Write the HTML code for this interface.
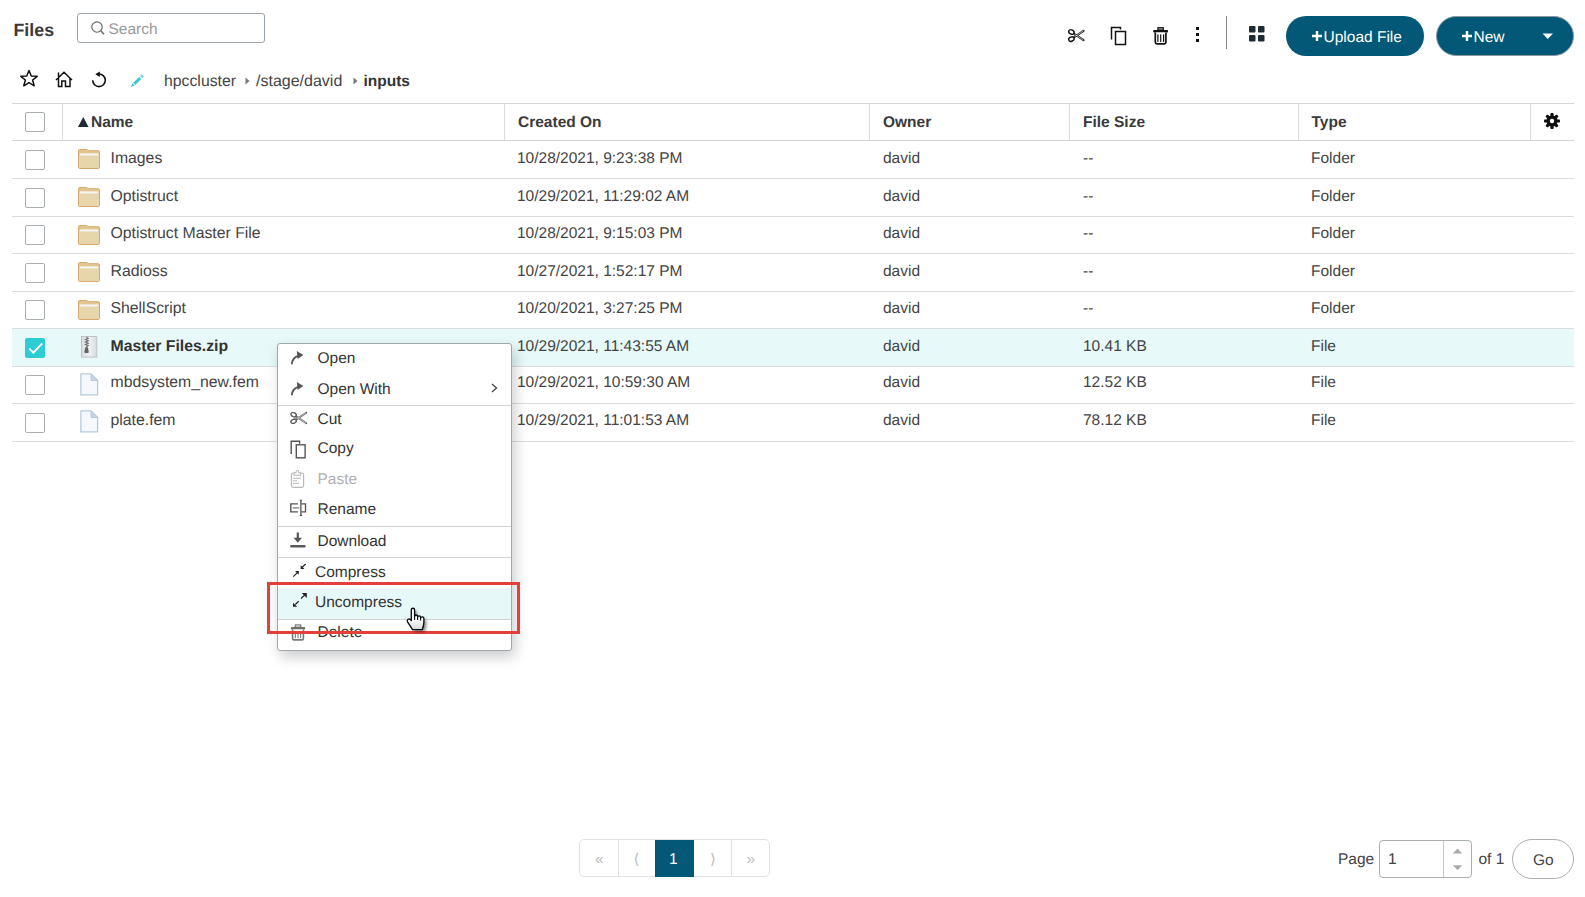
<!DOCTYPE html>
<html><head><meta charset="utf-8"><title>Files</title>
<style>
html,body{margin:0;padding:0;background:#fff;}
body{width:1585px;height:897px;position:relative;overflow:hidden;font-family:"Liberation Sans",sans-serif;text-rendering:geometricPrecision;}
.t{position:absolute;white-space:nowrap;}
.box{position:absolute;}
.ic{position:absolute;overflow:visible;}
svg{display:block;}
</style></head><body>
<div class="t" style="left:13.5px;top:21.73px;font-size:17.8px;line-height:17.8px;font-weight:700;color:#3a3a3a;">Files</div>
<div class="box" style="left:77px;top:13px;width:186px;height:28px;border:1px solid #9aa4aa;border-radius:3px;"></div>
<svg class="ic" style="left:90px;top:20px" width="16" height="16" viewBox="0 0 16 16"><circle cx="7" cy="7" r="5.2" fill="none" stroke="#666" stroke-width="1.15"/><line x1="10.8" y1="10.8" x2="14" y2="14.2" stroke="#666" stroke-width="1.3"/></svg>
<div class="t" style="left:108.5px;top:21.68px;font-size:15.5px;line-height:15.5px;font-weight:400;color:#9a9a9a;">Search</div>
<svg class="ic" style="left:1066px;top:27px" width="20" height="17" viewBox="0 0 20 17">
<path d="M8.2 6.8 L17.6 13.2 M8.2 10.2 L17.6 3.8" stroke="#222" stroke-width="2" fill="none" stroke-linecap="round"/>
<path d="M8.6 7.2 L17.2 12.9 M8.6 9.8 L17.2 4.1" stroke="#fff" stroke-width="0.7" fill="none" opacity="0.85"/>
<ellipse cx="5.4" cy="5" rx="2.8" ry="2.1" transform="rotate(25 5.4 5)" fill="#fff" stroke="#111" stroke-width="1.4"/>
<ellipse cx="5.4" cy="12.1" rx="2.8" ry="2.1" transform="rotate(-25 5.4 12.1)" fill="#fff" stroke="#111" stroke-width="1.4"/>
</svg>
<svg class="ic" style="left:1110px;top:26px" width="18" height="20" viewBox="0 0 18 20">
<path d="M1.5 13.5 V1.5 H10.5 V3.5" fill="none" stroke="#111" stroke-width="1.5"/>
<rect x="5.5" y="5.5" width="10" height="13" fill="none" stroke="#111" stroke-width="1.5"/>
</svg>
<svg class="ic" style="left:1152px;top:26px" width="18" height="20" viewBox="0 0 18 20">
<rect x="5.9" y="1.7" width="5.4" height="2.4" fill="#aaa" stroke="#111" stroke-width="1.2"/>
<rect x="1.2" y="4.1" width="14.8" height="2.4" rx="0.8" fill="#111"/>
<path d="M3.3 6.4 V16.2 Q3.3 17.8 4.9 17.8 H12.3 Q13.9 17.8 13.9 16.2 V6.4" fill="#fff" stroke="#111" stroke-width="1.7"/>
<rect x="5.3" y="8.2" width="1.2" height="7.8" rx="0.5" fill="#111"/><rect x="8.1" y="8.2" width="1.2" height="7.8" rx="0.5" fill="#111"/><rect x="11" y="8.2" width="1.2" height="7.8" rx="0.5" fill="#111"/>
</svg>
<div class="box" style="left:1195.5px;top:27px;width:3.5px;height:3px;background:#111"></div><div class="box" style="left:1195.5px;top:33px;width:3.5px;height:3px;background:#111"></div><div class="box" style="left:1195.5px;top:39px;width:3.5px;height:3px;background:#111"></div>
<div class="box" style="left:1226px;top:16px;width:1px;height:33px;background:#888"></div>
<svg class="ic" style="left:1249px;top:25.5px" width="16" height="16" viewBox="0 0 16 16">
<rect x="0" y="0" width="6.5" height="6.5" rx="1" fill="#1d2b36"/><rect x="9" y="0" width="6.5" height="6.5" rx="1" fill="#1d2b36"/>
<rect x="0" y="9" width="6.5" height="6.5" rx="1" fill="#1d2b36"/><rect x="9" y="9" width="6.5" height="6.5" rx="1" fill="#1d2b36"/>
</svg>
<div class="box" style="left:1286px;top:16px;width:138px;height:40px;border-radius:20px;background:#025876"></div>
<svg class="ic" style="left:1311.5px;top:30.5px" width="10" height="10" viewBox="0 0 10 10"><path d="M5 0 V10 M0 5 H10" stroke="#fff" stroke-width="2.4"/></svg>
<div class="t" style="left:1323.5px;top:29.68px;font-size:15.5px;line-height:15.5px;font-weight:400;color:#fff;">Upload File</div>
<div class="box" style="left:1436px;top:16.3px;width:136px;height:37.5px;border-radius:20px;background:#025876;border:1px solid #8a9aa3"></div>
<svg class="ic" style="left:1461.5px;top:30.5px" width="10" height="10" viewBox="0 0 10 10"><path d="M5 0 V10 M0 5 H10" stroke="#fff" stroke-width="2.4"/></svg>
<div class="t" style="left:1473.5px;top:29.68px;font-size:15.5px;line-height:15.5px;font-weight:400;color:#fff;">New</div>
<svg class="ic" style="left:1542px;top:32.5px" width="12" height="7" viewBox="0 0 12 7"><path d="M0.5 0.5 H11 L5.75 6 Z" fill="#fff"/></svg>
<svg class="ic" style="left:19px;top:69px" width="20" height="19" viewBox="0 0 20 19">
<path d="M10 1.5 L12.3 7 L18.2 7.3 L13.6 11 L15.2 16.8 L10 13.6 L4.8 16.8 L6.4 11 L1.8 7.3 L7.7 7 Z" fill="none" stroke="#111" stroke-width="1.5" stroke-linejoin="round"/>
</svg>
<svg class="ic" style="left:55px;top:71px" width="18" height="17" viewBox="0 0 18 17">
<path d="M1 9 L9 1.3 L17 9 M3.5 7 V15.5 H6.8 V10 H10.5 V15.5 H15 V7.5 M3.5 7.5 V1.5" fill="none" stroke="#111" stroke-width="1.5" stroke-linejoin="miter"/>
</svg>
<svg class="ic" style="left:91px;top:71px" width="17" height="17" viewBox="0 0 17 17">
<path d="M1.7 9.3 A6.3 6.3 0 1 0 8 3" fill="none" stroke="#111" stroke-width="1.6"/>
<path d="M8.8 0.6 L8.8 6 L4.3 3.3 Z" fill="#111"/>
</svg>
<svg class="ic" style="left:130px;top:74px" width="15" height="14" viewBox="0 0 15 14">
<path d="M4.3 9.9 L10.2 4" stroke="#3cc6d3" stroke-width="3"/>
<path d="M11 3.2 L12.8 1.4" stroke="#78d5df" stroke-width="3"/>
<path d="M1 12.9 L2.3 9.2 L4.7 11.6 Z" fill="#2cc4d0"/>
</svg>
<div class="t" style="left:164px;top:73.63px;font-size:15.8px;line-height:15.8px;font-weight:400;color:#444;">hpccluster</div>
<svg class="ic" style="left:245px;top:77.3px" width="5" height="8" viewBox="0 0 5 8"><path d="M0.5 0.5 L4.5 4 L0.5 7.5 Z" fill="#777"/></svg>
<div class="t" style="left:256px;top:74.46px;font-size:16px;line-height:16px;font-weight:400;color:#444;">/stage/david</div>
<svg class="ic" style="left:352.5px;top:77.3px" width="5" height="8" viewBox="0 0 5 8"><path d="M0.5 0.5 L4.5 4 L0.5 7.5 Z" fill="#777"/></svg>
<div class="t" style="left:363.5px;top:73.88px;font-size:15.5px;line-height:15.5px;font-weight:700;color:#333;">inputs</div>
<div class="box" style="left:12px;top:103px;width:1562px;height:1px;background:#d6d6d6"></div>
<div class="box" style="left:12px;top:140px;width:1562px;height:1px;background:#d6d6d6"></div>
<div class="box" style="left:62px;top:104px;width:1px;height:36px;background:#dcdcdc"></div>
<div class="box" style="left:504px;top:104px;width:1px;height:36px;background:#dcdcdc"></div>
<div class="box" style="left:869px;top:104px;width:1px;height:36px;background:#dcdcdc"></div>
<div class="box" style="left:1069px;top:104px;width:1px;height:36px;background:#dcdcdc"></div>
<div class="box" style="left:1298px;top:104px;width:1px;height:36px;background:#dcdcdc"></div>
<div class="box" style="left:1530px;top:104px;width:1px;height:36px;background:#dcdcdc"></div>
<div class="box" style="left:25px;top:112px;width:18px;height:18px;border:1px solid #a9afb3;border-radius:2px;background:#fff"></div>
<svg class="ic" style="left:77.5px;top:116.5px" width="11" height="10" viewBox="0 0 11 10"><path d="M5.25 0 L10.5 10 H0 Z" fill="#1d2b36"/></svg>
<div class="t" style="left:91px;top:114.88px;font-size:15.5px;line-height:15.5px;font-weight:700;color:#3a3a3a;">Name</div>
<div class="t" style="left:518px;top:114.88px;font-size:15.5px;line-height:15.5px;font-weight:700;color:#3a3a3a;">Created On</div>
<div class="t" style="left:883px;top:114.88px;font-size:15.5px;line-height:15.5px;font-weight:700;color:#3a3a3a;">Owner</div>
<div class="t" style="left:1083px;top:114.88px;font-size:15.5px;line-height:15.5px;font-weight:700;color:#3a3a3a;">File Size</div>
<div class="t" style="left:1311.5px;top:114.88px;font-size:15.5px;line-height:15.5px;font-weight:700;color:#3a3a3a;">Type</div>
<svg class="ic" style="left:1543px;top:112px" width="18" height="18" viewBox="0 0 18 18">
<g transform="translate(9 9)" fill="#111">
<circle r="5.6"/>
<rect x="-1.6" y="-8" width="3.2" height="16" rx="0.8"/>
<rect x="-1.6" y="-8" width="3.2" height="16" rx="1.2" transform="rotate(45)"/>
<rect x="-1.6" y="-8" width="3.2" height="16" rx="0.8" transform="rotate(90)"/>
<rect x="-1.6" y="-8" width="3.2" height="16" rx="1.2" transform="rotate(135)"/>
<circle r="2.2" fill="#fff"/>
</g></svg>
<div class="box" style="left:12px;top:178px;width:1562px;height:1px;background:#dcdcdc"></div>
<div class="box" style="left:25px;top:149.5px;width:18px;height:18px;border:1px solid #a9afb3;border-radius:2px;background:#fff"></div>
<div class="box" style="left:78px;top:149.3px"><svg width="22" height="20" viewBox="0 0 22 20"><path d="M0.5 1.8 Q0.5 0.5 1.8 0.5 H8.5 Q9.5 0.5 10 1.7 H20.2 Q21.5 1.7 21.5 3 V18.2 Q21.5 19.5 20.2 19.5 H1.8 Q0.5 19.5 0.5 18.2 Z" fill="#e3c590" stroke="#d9aa6c" stroke-width="1"/><rect x="1.7" y="4.4" width="18.6" height="2.3" fill="#f4f7f9"/><path d="M1 6.7 H21 V18.2 Q21 19 20.2 19 H1.8 Q1 19 1 18.2 Z" fill="#e7d6ab"/></svg></div>
<div class="t" style="left:110.5px;top:150.63px;font-size:15.8px;line-height:15.8px;font-weight:400;color:#444;">Images</div>
<div class="t" style="left:517px;top:150.88px;font-size:15.5px;line-height:15.5px;font-weight:400;color:#444;">10/28/2021, 9:23:38 PM</div>
<div class="t" style="left:883px;top:150.88px;font-size:15.5px;line-height:15.5px;font-weight:400;color:#444;">david</div>
<div class="t" style="left:1083px;top:150.88px;font-size:15.5px;line-height:15.5px;font-weight:400;color:#444;">--</div>
<div class="t" style="left:1311px;top:150.88px;font-size:15.5px;line-height:15.5px;font-weight:400;color:#444;">Folder</div>
<div class="box" style="left:12px;top:216px;width:1562px;height:1px;background:#dcdcdc"></div>
<div class="box" style="left:25px;top:187.5px;width:18px;height:18px;border:1px solid #a9afb3;border-radius:2px;background:#fff"></div>
<div class="box" style="left:78px;top:187.3px"><svg width="22" height="20" viewBox="0 0 22 20"><path d="M0.5 1.8 Q0.5 0.5 1.8 0.5 H8.5 Q9.5 0.5 10 1.7 H20.2 Q21.5 1.7 21.5 3 V18.2 Q21.5 19.5 20.2 19.5 H1.8 Q0.5 19.5 0.5 18.2 Z" fill="#e3c590" stroke="#d9aa6c" stroke-width="1"/><rect x="1.7" y="4.4" width="18.6" height="2.3" fill="#f4f7f9"/><path d="M1 6.7 H21 V18.2 Q21 19 20.2 19 H1.8 Q1 19 1 18.2 Z" fill="#e7d6ab"/></svg></div>
<div class="t" style="left:110.5px;top:188.63px;font-size:15.8px;line-height:15.8px;font-weight:400;color:#444;">Optistruct</div>
<div class="t" style="left:517px;top:188.88px;font-size:15.5px;line-height:15.5px;font-weight:400;color:#444;">10/29/2021, 11:29:02 AM</div>
<div class="t" style="left:883px;top:188.88px;font-size:15.5px;line-height:15.5px;font-weight:400;color:#444;">david</div>
<div class="t" style="left:1083px;top:188.88px;font-size:15.5px;line-height:15.5px;font-weight:400;color:#444;">--</div>
<div class="t" style="left:1311px;top:188.88px;font-size:15.5px;line-height:15.5px;font-weight:400;color:#444;">Folder</div>
<div class="box" style="left:12px;top:253px;width:1562px;height:1px;background:#dcdcdc"></div>
<div class="box" style="left:25px;top:225px;width:18px;height:18px;border:1px solid #a9afb3;border-radius:2px;background:#fff"></div>
<div class="box" style="left:78px;top:224.8px"><svg width="22" height="20" viewBox="0 0 22 20"><path d="M0.5 1.8 Q0.5 0.5 1.8 0.5 H8.5 Q9.5 0.5 10 1.7 H20.2 Q21.5 1.7 21.5 3 V18.2 Q21.5 19.5 20.2 19.5 H1.8 Q0.5 19.5 0.5 18.2 Z" fill="#e3c590" stroke="#d9aa6c" stroke-width="1"/><rect x="1.7" y="4.4" width="18.6" height="2.3" fill="#f4f7f9"/><path d="M1 6.7 H21 V18.2 Q21 19 20.2 19 H1.8 Q1 19 1 18.2 Z" fill="#e7d6ab"/></svg></div>
<div class="t" style="left:110.5px;top:225.63px;font-size:15.8px;line-height:15.8px;font-weight:400;color:#444;">Optistruct Master File</div>
<div class="t" style="left:517px;top:225.88px;font-size:15.5px;line-height:15.5px;font-weight:400;color:#444;">10/28/2021, 9:15:03 PM</div>
<div class="t" style="left:883px;top:225.88px;font-size:15.5px;line-height:15.5px;font-weight:400;color:#444;">david</div>
<div class="t" style="left:1083px;top:225.88px;font-size:15.5px;line-height:15.5px;font-weight:400;color:#444;">--</div>
<div class="t" style="left:1311px;top:225.88px;font-size:15.5px;line-height:15.5px;font-weight:400;color:#444;">Folder</div>
<div class="box" style="left:12px;top:291px;width:1562px;height:1px;background:#dcdcdc"></div>
<div class="box" style="left:25px;top:262.5px;width:18px;height:18px;border:1px solid #a9afb3;border-radius:2px;background:#fff"></div>
<div class="box" style="left:78px;top:262.3px"><svg width="22" height="20" viewBox="0 0 22 20"><path d="M0.5 1.8 Q0.5 0.5 1.8 0.5 H8.5 Q9.5 0.5 10 1.7 H20.2 Q21.5 1.7 21.5 3 V18.2 Q21.5 19.5 20.2 19.5 H1.8 Q0.5 19.5 0.5 18.2 Z" fill="#e3c590" stroke="#d9aa6c" stroke-width="1"/><rect x="1.7" y="4.4" width="18.6" height="2.3" fill="#f4f7f9"/><path d="M1 6.7 H21 V18.2 Q21 19 20.2 19 H1.8 Q1 19 1 18.2 Z" fill="#e7d6ab"/></svg></div>
<div class="t" style="left:110.5px;top:263.63px;font-size:15.8px;line-height:15.8px;font-weight:400;color:#444;">Radioss</div>
<div class="t" style="left:517px;top:263.88px;font-size:15.5px;line-height:15.5px;font-weight:400;color:#444;">10/27/2021, 1:52:17 PM</div>
<div class="t" style="left:883px;top:263.88px;font-size:15.5px;line-height:15.5px;font-weight:400;color:#444;">david</div>
<div class="t" style="left:1083px;top:263.88px;font-size:15.5px;line-height:15.5px;font-weight:400;color:#444;">--</div>
<div class="t" style="left:1311px;top:263.88px;font-size:15.5px;line-height:15.5px;font-weight:400;color:#444;">Folder</div>
<div class="box" style="left:12px;top:328px;width:1562px;height:1px;background:#dcdcdc"></div>
<div class="box" style="left:25px;top:300px;width:18px;height:18px;border:1px solid #a9afb3;border-radius:2px;background:#fff"></div>
<div class="box" style="left:78px;top:299.8px"><svg width="22" height="20" viewBox="0 0 22 20"><path d="M0.5 1.8 Q0.5 0.5 1.8 0.5 H8.5 Q9.5 0.5 10 1.7 H20.2 Q21.5 1.7 21.5 3 V18.2 Q21.5 19.5 20.2 19.5 H1.8 Q0.5 19.5 0.5 18.2 Z" fill="#e3c590" stroke="#d9aa6c" stroke-width="1"/><rect x="1.7" y="4.4" width="18.6" height="2.3" fill="#f4f7f9"/><path d="M1 6.7 H21 V18.2 Q21 19 20.2 19 H1.8 Q1 19 1 18.2 Z" fill="#e7d6ab"/></svg></div>
<div class="t" style="left:110.5px;top:300.63px;font-size:15.8px;line-height:15.8px;font-weight:400;color:#444;">ShellScript</div>
<div class="t" style="left:517px;top:300.88px;font-size:15.5px;line-height:15.5px;font-weight:400;color:#444;">10/20/2021, 3:27:25 PM</div>
<div class="t" style="left:883px;top:300.88px;font-size:15.5px;line-height:15.5px;font-weight:400;color:#444;">david</div>
<div class="t" style="left:1083px;top:300.88px;font-size:15.5px;line-height:15.5px;font-weight:400;color:#444;">--</div>
<div class="t" style="left:1311px;top:300.88px;font-size:15.5px;line-height:15.5px;font-weight:400;color:#444;">Folder</div>
<div class="box" style="left:12px;top:329.0px;width:1562px;height:36.5px;background:#e7f9f9"></div>
<div class="box" style="left:12px;top:366px;width:1562px;height:1px;background:#dcdcdc"></div>
<div class="box" style="left:25px;top:337.5px;width:20px;height:20px;border-radius:2px;background:#2ecdd4"><svg width="20" height="20" viewBox="0 0 20 20" style="position:absolute;left:0;top:0"><path d="M4.3 10.6 L8.4 14.6 L17.2 5.4" fill="none" stroke="#fff" stroke-width="2"/></svg></div>
<div class="box" style="left:81px;top:335.7px"><svg width="17" height="22" viewBox="0 0 17 22"><defs><linearGradient id="zg" x1="0" x2="1"><stop offset="0" stop-color="#d8dde1"/><stop offset="0.5" stop-color="#eef2f5"/><stop offset="1" stop-color="#d5dbe0"/></linearGradient></defs><rect x="0.5" y="0.5" width="15.3" height="20.6" fill="url(#zg)" stroke="#bfc3c6"/><path d="M5.2 1.2 L7.2 2.4 L4.4 3.6 L7.2 4.8 L4.4 6 L7.2 7.2 L4.4 8.4 L7.2 9.6 L5.2 10.8" fill="none" stroke="#6a6a6a" stroke-width="1.1"/><path d="M4.3 11.2 H6.9 L7.8 16.4 Q5.6 17.6 3.3 16.4 Z" fill="#626262"/></svg></div>
<div class="t" style="left:110.5px;top:338.63px;font-size:15.8px;line-height:15.8px;font-weight:700;color:#333;">Master Files.zip</div>
<div class="t" style="left:517px;top:338.88px;font-size:15.5px;line-height:15.5px;font-weight:400;color:#444;">10/29/2021, 11:43:55 AM</div>
<div class="t" style="left:883px;top:338.88px;font-size:15.5px;line-height:15.5px;font-weight:400;color:#444;">david</div>
<div class="t" style="left:1083px;top:338.88px;font-size:15.5px;line-height:15.5px;font-weight:400;color:#444;">10.41 KB</div>
<div class="t" style="left:1311px;top:338.88px;font-size:15.5px;line-height:15.5px;font-weight:400;color:#444;">File</div>
<div class="box" style="left:12px;top:403px;width:1562px;height:1px;background:#dcdcdc"></div>
<div class="box" style="left:25px;top:375px;width:18px;height:18px;border:1px solid #a9afb3;border-radius:2px;background:#fff"></div>
<div class="box" style="left:80px;top:372.5px"><svg width="19" height="23" viewBox="0 0 19 23"><path d="M0.9 0.9 H11 L17.6 7.5 V21.9 H0.9 Z" fill="#f5f9fd" stroke="#b7cadc" stroke-width="1.3" stroke-linejoin="round"/><path d="M11 0.9 V7.5 H17.6 Z" fill="#c6d6e6" stroke="#b7cadc" stroke-width="1" stroke-linejoin="round"/></svg></div>
<div class="t" style="left:110.5px;top:375.13px;font-size:15.8px;line-height:15.8px;font-weight:400;color:#444;">mbdsystem_new.fem</div>
<div class="t" style="left:517px;top:375.38px;font-size:15.5px;line-height:15.5px;font-weight:400;color:#444;">10/29/2021, 10:59:30 AM</div>
<div class="t" style="left:883px;top:375.38px;font-size:15.5px;line-height:15.5px;font-weight:400;color:#444;">david</div>
<div class="t" style="left:1083px;top:375.38px;font-size:15.5px;line-height:15.5px;font-weight:400;color:#444;">12.52 KB</div>
<div class="t" style="left:1311px;top:375.38px;font-size:15.5px;line-height:15.5px;font-weight:400;color:#444;">File</div>
<div class="box" style="left:12px;top:441px;width:1562px;height:1px;background:#dcdcdc"></div>
<div class="box" style="left:25px;top:412.5px;width:18px;height:18px;border:1px solid #a9afb3;border-radius:2px;background:#fff"></div>
<div class="box" style="left:80px;top:410.0px"><svg width="19" height="23" viewBox="0 0 19 23"><path d="M0.9 0.9 H11 L17.6 7.5 V21.9 H0.9 Z" fill="#f5f9fd" stroke="#b7cadc" stroke-width="1.3" stroke-linejoin="round"/><path d="M11 0.9 V7.5 H17.6 Z" fill="#c6d6e6" stroke="#b7cadc" stroke-width="1" stroke-linejoin="round"/></svg></div>
<div class="t" style="left:110.5px;top:413.13px;font-size:15.8px;line-height:15.8px;font-weight:400;color:#444;">plate.fem</div>
<div class="t" style="left:517px;top:413.38px;font-size:15.5px;line-height:15.5px;font-weight:400;color:#444;">10/29/2021, 11:01:53 AM</div>
<div class="t" style="left:883px;top:413.38px;font-size:15.5px;line-height:15.5px;font-weight:400;color:#444;">david</div>
<div class="t" style="left:1083px;top:413.38px;font-size:15.5px;line-height:15.5px;font-weight:400;color:#444;">78.12 KB</div>
<div class="t" style="left:1311px;top:413.38px;font-size:15.5px;line-height:15.5px;font-weight:400;color:#444;">File</div>
<div class="box" style="left:277px;top:343px;width:235px;height:308px;background:#fff;border:1px solid #9ea8ae;border-radius:3px;box-sizing:border-box;box-shadow:3px 6px 14px rgba(0,0,0,0.2)"></div>
<div class="box" style="left:278px;top:405px;width:233px;height:1px;background:#d2d2d2"></div>
<div class="box" style="left:278px;top:526px;width:233px;height:1px;background:#d2d2d2"></div>
<div class="box" style="left:278px;top:557px;width:233px;height:1px;background:#d2d2d2"></div>
<div class="box" style="left:278px;top:587.5px;width:233px;height:31.5px;background:#e7f8f8"></div>
<div class="box" style="left:278px;top:619px;width:233px;height:1px;background:#d2d2d2"></div>
<svg class="ic" style="left:290px;top:351px" width="14" height="14" viewBox="0 0 14 14"><path d="M1.8 13.3 Q2.2 6.5 8.5 4.8" fill="none" stroke="#555" stroke-width="1.9"/><path d="M6.8 0 L13.3 3.9 L7.6 8 Z" fill="#555"/></svg>
<div class="t" style="left:317.5px;top:350.88px;font-size:15.5px;line-height:15.5px;font-weight:400;color:#333;">Open</div>
<svg class="ic" style="left:290px;top:381.5px" width="14" height="14" viewBox="0 0 14 14"><path d="M1.8 13.3 Q2.2 6.5 8.5 4.8" fill="none" stroke="#555" stroke-width="1.9"/><path d="M6.8 0 L13.3 3.9 L7.6 8 Z" fill="#555"/></svg>
<div class="t" style="left:317.5px;top:381.88px;font-size:15.5px;line-height:15.5px;font-weight:400;color:#333;">Open With</div>
<svg class="ic" style="left:491px;top:383px" width="7" height="10" viewBox="0 0 7 10"><path d="M1 1 L5.5 5 L1 9" fill="none" stroke="#444" stroke-width="1.3"/></svg>
<svg class="ic" style="left:289px;top:411px" width="19" height="14" viewBox="0 0 19 14">
<path d="M7.5 5.6 L17.3 12.2 M7.5 8.4 L17.3 1.8" stroke="#666" stroke-width="1.9" fill="none" stroke-linecap="round"/>
<path d="M7.9 5.9 L16.9 11.9 M7.9 8.1 L16.9 2.1" stroke="#fff" stroke-width="0.6" fill="none" opacity="0.85"/>
<ellipse cx="4.6" cy="3.7" rx="2.8" ry="2" transform="rotate(25 4.6 3.7)" fill="#fff" stroke="#555" stroke-width="1.3"/>
<ellipse cx="4.6" cy="10.3" rx="2.8" ry="2" transform="rotate(-25 4.6 10.3)" fill="#fff" stroke="#555" stroke-width="1.3"/></svg>
<div class="t" style="left:317.5px;top:411.88px;font-size:15.5px;line-height:15.5px;font-weight:400;color:#333;">Cut</div>
<svg class="ic" style="left:289.5px;top:439.5px" width="17" height="19" viewBox="0 0 17 19">
<path d="M1.2 14 V1.2 H9.6 V3.8" fill="none" stroke="#555" stroke-width="1.4"/>
<rect x="6.3" y="4.8" width="8.8" height="13" fill="#fff" stroke="#555" stroke-width="1.4"/></svg>
<div class="t" style="left:317.5px;top:441.48px;font-size:15.5px;line-height:15.5px;font-weight:400;color:#333;">Copy</div>
<svg class="ic" style="left:290px;top:469px" width="15" height="20" viewBox="0 0 15 20">
<rect x="1.4" y="4" width="12.2" height="14.4" rx="1.8" fill="none" stroke="#b8b8b8" stroke-width="1.2"/>
<path d="M4.1 6.2 V4.6 Q4.1 3.8 5 3.8 H5.8 Q6.3 1.2 7.4 1.2 Q8.5 1.2 9 3.8 H9.7 Q10.6 3.8 10.6 4.6 V6.2 Z" fill="#fff" stroke="#b8b8b8" stroke-width="1.1"/>
<path d="M3 9.2 H11 M3 11.8 H7 M3 14.3 H9" stroke="#bbb" stroke-width="1.1"/></svg>
<div class="t" style="left:317.5px;top:471.88px;font-size:15.5px;line-height:15.5px;font-weight:400;color:#b0b0b0;">Paste</div>
<svg class="ic" style="left:290px;top:499px" width="17" height="18" viewBox="0.3 0 17 18">
<path d="M8.2 4.9 H1.1 V12.9 H8.2" fill="none" stroke="#555" stroke-width="1.4"/>
<path d="M3 8.9 H9.7" stroke="#888" stroke-width="1.4"/>
<path d="M11.2 1.2 V16.5" stroke="#444" stroke-width="1.2"/>
<path d="M10 1.2 H12.4 M10 16.5 H12.4" stroke="#444" stroke-width="0.9"/>
<path d="M11.5 4.9 H15.8 V12.9 H11.5" fill="none" stroke="#555" stroke-width="1.3"/></svg>
<div class="t" style="left:317.5px;top:501.58px;font-size:15.5px;line-height:15.5px;font-weight:400;color:#333;">Rename</div>
<svg class="ic" style="left:289.5px;top:531.5px" width="16" height="16" viewBox="0 0 16 16">
<path d="M7.8 0.5 V8" stroke="#555" stroke-width="2.2"/><path d="M3.6 5.8 L7.8 10.8 L12 5.8 Z" fill="#555"/>
<rect x="0.3" y="13" width="15.2" height="2.5" fill="#5a5a5a"/></svg>
<div class="t" style="left:317.5px;top:533.78px;font-size:15.5px;line-height:15.5px;font-weight:400;color:#333;">Download</div>
<svg class="ic" style="left:292px;top:563px" width="15" height="15" viewBox="0 0 15 15">
<path d="M1.3 13.6 L5.6 9.4 M13.6 1 L9.6 4.9" stroke="#222" stroke-width="1.2"/>
<path d="M3 8.1 H6.8 V11.8 Z M8.7 2.2 V6 H12.5 Z" fill="#222"/></svg>
<div class="t" style="left:315px;top:564.88px;font-size:15.5px;line-height:15.5px;font-weight:400;color:#333;">Compress</div>
<svg class="ic" style="left:291px;top:588px" width="17" height="20" viewBox="0 0 17 20">
<path d="M10.1 10.5 L13.6 7.1 M7.7 13.2 L4.3 16.5" stroke="#222" stroke-width="1.2"/>
<path d="M10.8 4.9 H15.8 V9.9 Z M2 14.7 V18.7 H6.2 Z" fill="#222"/></svg>
<div class="t" style="left:315px;top:594.88px;font-size:15.5px;line-height:15.5px;font-weight:400;color:#333;">Uncompress</div>
<svg class="ic" style="left:289.5px;top:624px" width="16" height="18" viewBox="0 0 16 18">
<rect x="5.3" y="0.9" width="5.4" height="2.2" fill="#fff" stroke="#777" stroke-width="1.2"/>
<rect x="0.8" y="3" width="14.4" height="2.6" rx="0.8" fill="#6f6f6f"/>
<path d="M2.6 5.6 V14.4 Q2.6 15.9 4.1 15.9 H11.9 Q13.4 15.9 13.4 14.4 V5.6" fill="#fff" stroke="#777" stroke-width="1.6"/>
<rect x="4.8" y="7.2" width="1.2" height="7" fill="#888"/><rect x="7.4" y="7.2" width="1.2" height="7" fill="#888"/><rect x="10" y="7.2" width="1.2" height="7" fill="#888"/></svg>
<div class="t" style="left:317.5px;top:625.28px;font-size:15.5px;line-height:15.5px;font-weight:400;color:#333;">Delete</div>
<div class="box" style="left:267px;top:582px;width:253px;height:51.5px;border:3px solid #e4403b;box-sizing:border-box"></div>
<svg class="ic" style="left:405px;top:606px" width="26" height="30" viewBox="0 0 26 30">
<defs><filter id="sh" x="-50%" y="-50%" width="200%" height="200%"><feGaussianBlur stdDeviation="1.6"/></filter>
<linearGradient id="hg" x1="0" y1="0" x2="0" y2="1"><stop offset="0.5" stop-color="#fff"/><stop offset="1" stop-color="#d8d8d8"/></linearGradient></defs>
<path d="M6.3 14.5 V3.8 Q6.3 2.2 7.95 2.2 Q9.6 2.2 9.6 3.8 V10.5 Q9.6 9 11.1 9 Q12.6 9 12.6 10.5 V11.3 Q12.6 9.8 14.1 9.8 Q15.6 9.8 15.6 11.3 V12.3 Q15.6 10.8 17.25 10.8 Q18.9 10.8 18.9 12.5 V16 Q18.9 19 17.3 23.6 H7.6 L2.5 15.8 Q1.8 14.2 3 13.3 Q4.3 12.5 5.3 13.6 Z" fill="#000" opacity="0.45" filter="url(#sh)" transform="translate(2.5 2.5)"/>
<path d="M6.3 14.5 V3.8 Q6.3 2.2 7.95 2.2 Q9.6 2.2 9.6 3.8 V10.5 Q9.6 9 11.1 9 Q12.6 9 12.6 10.5 V11.3 Q12.6 9.8 14.1 9.8 Q15.6 9.8 15.6 11.3 V12.3 Q15.6 10.8 17.25 10.8 Q18.9 10.8 18.9 12.5 V16 Q18.9 19 17.3 23.6 H7.6 L2.5 15.8 Q1.8 14.2 3 13.3 Q4.3 12.5 5.3 13.6 Z" fill="url(#hg)" stroke="#0a0a14" stroke-width="1.35" stroke-linejoin="round"/>
<path d="M9.6 10.5 V14 M12.6 11.3 V14 M15.6 12.3 V14.5" stroke="#0a0a14" stroke-width="1.1"/>
</svg>
<div class="box" style="left:579px;top:839px;width:191px;height:38px;border:1px solid #e2e2e2;border-radius:5px;box-sizing:border-box"></div>
<div class="box" style="left:618px;top:840px;width:1px;height:36px;background:#e2e2e2"></div>
<div class="box" style="left:730.5px;top:840px;width:1px;height:36px;background:#e2e2e2"></div>
<div class="box" style="left:655px;top:839.5px;width:39px;height:37px;background:#025876"></div>
<div class="t" style="left:595px;top:851.88px;font-size:15.5px;line-height:15.5px;font-weight:400;color:#bdbdbd;">&laquo;</div>
<div class="t" style="left:633.5px;top:852.30px;font-size:15px;line-height:15px;font-weight:400;color:#bbb;">&#10216;</div>
<div class="t" style="left:669px;top:852.08px;font-size:15.5px;line-height:15.5px;font-weight:400;color:#fff;">1</div>
<div class="t" style="left:710px;top:852.30px;font-size:15px;line-height:15px;font-weight:400;color:#bbb;">&#10217;</div>
<div class="t" style="left:746.5px;top:851.88px;font-size:15.5px;line-height:15.5px;font-weight:400;color:#bdbdbd;">&raquo;</div>
<div class="t" style="left:1338px;top:851.68px;font-size:15.5px;line-height:15.5px;font-weight:400;color:#444;">Page</div>
<div class="box" style="left:1379px;top:840px;width:93px;height:38px;border:1px solid #a9afb3;border-radius:4px;box-sizing:border-box"></div>
<div class="box" style="left:1443px;top:841px;width:1px;height:36px;background:#c8c8c8"></div>
<svg class="ic" style="left:1452px;top:847px" width="11" height="25" viewBox="0 0 11 25"><path d="M0.8 6.4 L5.5 1.5 L10.2 6.4 Z M0.8 18.2 H10.2 L5.5 23.2 Z" fill="#aaa"/></svg>
<div class="t" style="left:1388px;top:852.38px;font-size:15.5px;line-height:15.5px;font-weight:400;color:#444;">1</div>
<div class="t" style="left:1478.5px;top:851.88px;font-size:15.5px;line-height:15.5px;font-weight:400;color:#444;">of 1</div>
<div class="box" style="left:1512px;top:839px;width:62px;height:40px;border:1px solid #a9afb3;border-radius:21px;box-sizing:border-box"></div>
<div class="t" style="left:1533px;top:852.68px;font-size:15.5px;line-height:15.5px;font-weight:400;color:#444;">Go</div>
</body></html>
